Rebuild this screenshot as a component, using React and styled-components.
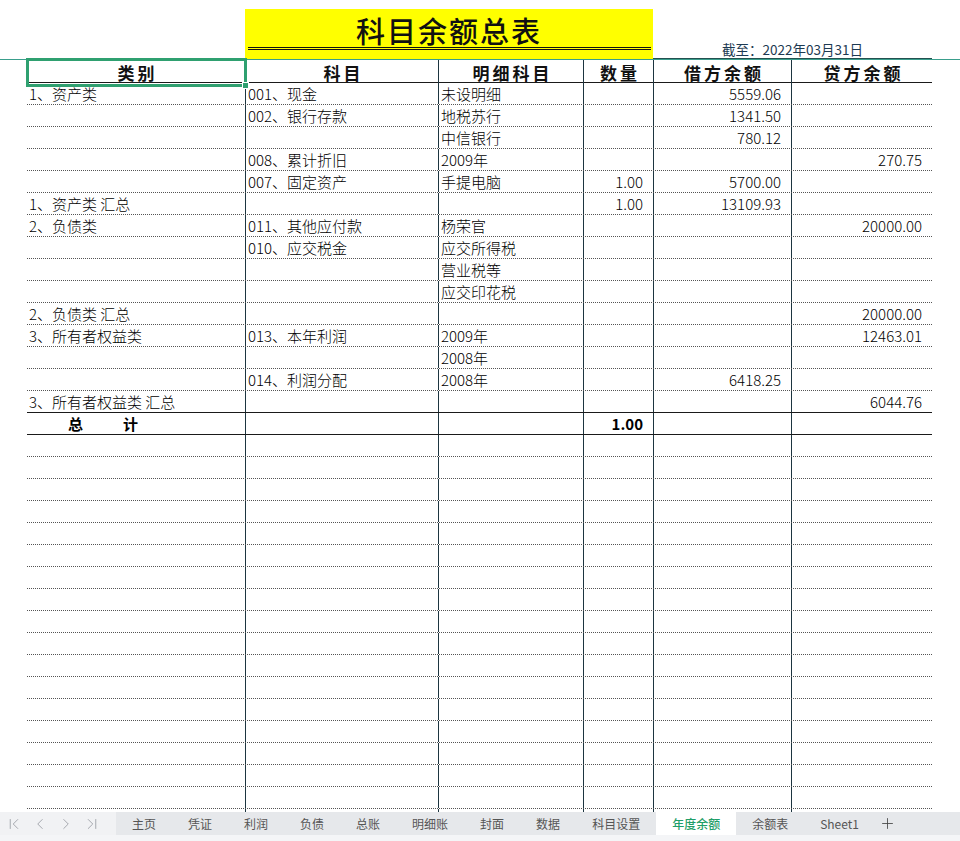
import React from "react";
import styled, { createGlobalStyle } from "styled-components";
import { ChevronFirst, ChevronLeft, ChevronRight, ChevronLast, Plus } from "lucide-react";

const GlobalStyle = createGlobalStyle`
  html, body {
    margin: 0;
    padding: 0;
    background: #ffffff;
  }
  body {
    font-family: "Noto Sans CJK SC", "Noto Sans", sans-serif;
  }
`;

const Page = styled.div`
  width: 960px;
  height: 841px;
  display: flex;
  flex-direction: column;
  overflow: hidden;
  background: #ffffff;
`;

const Top = styled.div`
  display: flex;
  height: 59px;
  padding-left: 245px;
  box-sizing: border-box;
`;

const TitleBox = styled.div`
  width: 408px;
  height: 50px;
  margin-top: 9px;
  background: #ffff00;
  display: flex;
  flex-direction: column;
`;

const Title = styled.div`
  height: 38px;
  display: flex;
  align-items: center;
  justify-content: center;
  font-size: 29px;
  font-weight: 500;
  letter-spacing: 2px;
  color: #111;
  padding-top: 3px;
  box-sizing: border-box;
`;

const DoubleLine = styled.div`
  height: 3px;
  margin: 0 2px 0 3px;
  border-top: 1px solid #111;
  border-bottom: 1px solid #111;
  box-sizing: border-box;
`;

const DateCell = styled.div`
  width: 279px;
  height: 59px;
  box-sizing: border-box;
  display: flex;
  align-items: flex-end;
  padding-left: 69px;
  font-size: 13.5px;
  line-height: 17px;
  color: #1d3a52;
  border-bottom: 1px solid #24504f;
`;

const FreezeLine = styled.div`
  height: 1px;
  background: #3a9e8c;
`;

const Sheet = styled.div`
  flex: 1;
  min-height: 0;
`;

const Row = styled.div`
  display: grid;
  grid-template-columns: 219px 193px 145px 70px 138px 140px;
  margin-left: 27px;
  width: 905px;
  height: ${(p) => p.$h || 22}px;
  box-sizing: border-box;
  border-bottom: ${(p) =>
    p.$tail ? "none" : p.$solid ? "1px solid #1a1a1a" : "1px dotted #555"};
`;

const Cell = styled.div`
  position: relative;
  box-sizing: border-box;
  display: flex;
  align-items: center;
  justify-content: ${(p) => (p.$right ? "flex-end" : "flex-start")};
  padding: ${(p) => (p.$right ? "0 10px 0 0" : "0 0 0 2px")};
  border-right: ${(p) => (p.$last ? "none" : "1px solid #1d3540")};
  font-size: 15px;
  font-weight: ${(p) => (p.$bold ? 700 : 300)};
  color: #000;
  white-space: nowrap;
`;

const HeadCell = styled(Cell)`
  justify-content: center;
  padding: 0;
  font-size: 17px;
  font-weight: 700;
  letter-spacing: 3px;
  color: #111;
  text-indent: 3px;
`;

const Selection = styled.div`
  position: absolute;
  z-index: 2;
  top: -2px;
  left: -1px;
  right: -2px;
  bottom: -2px;
  border: 3px solid #2fa070;
  pointer-events: none;
`;

const Handle = styled.div`
  position: absolute;
  right: -5px;
  bottom: -5px;
  width: 5px;
  height: 5px;
  background: #2fa070;
  border: 1px solid #ffffff;
`;

const TotalLabel = styled.div`
  display: flex;
  gap: 40px;
  padding-left: 39px;
`;

const TabBar = styled.div`
  height: 23px;
  display: flex;
  background: #e6e8eb;
  font-size: 12px;
  color: #555;
`;

const Nav = styled.div`
  width: 116px;
  display: flex;
  align-items: center;
  gap: 8px;
  padding-left: 5px;
  box-sizing: border-box;
  background: #f1f2f4;
  color: #a3a7ad;
`;

const Tab = styled.div`
  padding: 0 16px;
  display: flex;
  align-items: center;
  background: ${(p) => (p.$active ? "#ffffff" : "transparent")};
  color: ${(p) => (p.$active ? "#1f9e68" : "#555")};
  font-weight: ${(p) => (p.$active ? 500 : 400)};
  white-space: nowrap;
`;

const AddTab = styled.div`
  display: flex;
  align-items: center;
  padding-left: 4px;
  color: #444;
`;

const Strip = styled.div`
  height: 6px;
  background: #f4f5f7;
`;

const headers = ["类别", "科目", "明细科目", "数量", "借方余额", "贷方余额"];

const rows = [
  ["1、资产类", "001、现金", "未设明细", "", "5559.06", ""],
  ["", "002、银行存款", "地税苏行", "", "1341.50", ""],
  ["", "", "中信银行", "", "780.12", ""],
  ["", "008、累计折旧", "2009年", "", "", "270.75"],
  ["", "007、固定资产", "手提电脑", "1.00", "5700.00", ""],
  ["1、资产类 汇总", "", "", "1.00", "13109.93", ""],
  ["2、负债类", "011、其他应付款", "杨荣官", "", "", "20000.00"],
  ["", "010、应交税金", "应交所得税", "", "", ""],
  ["", "", "营业税等", "", "", ""],
  ["", "", "应交印花税", "", "", ""],
  ["2、负债类 汇总", "", "", "", "", "20000.00"],
  ["3、所有者权益类", "013、本年利润", "2009年", "", "", "12463.01"],
  ["", "", "2008年", "", "", ""],
  ["", "014、利润分配", "2008年", "", "6418.25", ""],
  ["3、所有者权益类 汇总", "", "", "", "", "6044.76"],
];

const tabs = ["主页", "凭证", "利润", "负债", "总账", "明细账", "封面", "数据", "科目设置", "年度余额", "余额表", "Sheet1"];

const EmptyRow = ({ h, tail }) => (
  <Row $h={h} $tail={tail}>
    {headers.map((_, ci) => (
      <Cell key={ci} $last={ci === 5} />
    ))}
  </Row>
);

export default function App() {
  return (
    <Page>
      <GlobalStyle />
      <Top>
        <TitleBox>
          <Title>科目余额总表</Title>
          <DoubleLine />
        </TitleBox>
        <DateCell>截至：2022年03月31日</DateCell>
      </Top>
      <FreezeLine />
      <Sheet>
        <Row $h={23} $solid>
          {headers.map((h, i) => (
            <HeadCell key={h} $last={i === 5}>
              {h}
              {i === 0 && (
                <Selection>
                  <Handle />
                </Selection>
              )}
            </HeadCell>
          ))}
        </Row>
        {rows.map((r, ri) => (
          <Row key={ri} $solid={ri === rows.length - 1}>
            {r.map((v, ci) => (
              <Cell key={ci} $right={ci >= 3} $last={ci === 5}>
                {v}
              </Cell>
            ))}
          </Row>
        ))}
        <Row $solid>
          <Cell $bold>
            <TotalLabel>
              <span>总</span>
              <span>计</span>
            </TotalLabel>
          </Cell>
          <Cell />
          <Cell />
          <Cell $right $bold>1.00</Cell>
          <Cell $right />
          <Cell $right $last />
        </Row>
        {Array.from({ length: 17 }).map((_, i) => (
          <EmptyRow key={"e" + i} />
        ))}
        <EmptyRow h={3} tail />
      </Sheet>
      <TabBar>
        <Nav>
          <ChevronFirst size={18} strokeWidth={1.3} />
          <ChevronLeft size={18} strokeWidth={1.3} />
          <ChevronRight size={18} strokeWidth={1.3} />
          <ChevronLast size={18} strokeWidth={1.3} />
        </Nav>
        {tabs.map((t) => (
          <Tab key={t} $active={t === "年度余额"}>
            {t}
          </Tab>
        ))}
        <AddTab>
          <Plus size={17} strokeWidth={1.2} />
        </AddTab>
      </TabBar>
      <Strip />
    </Page>
  );
}
